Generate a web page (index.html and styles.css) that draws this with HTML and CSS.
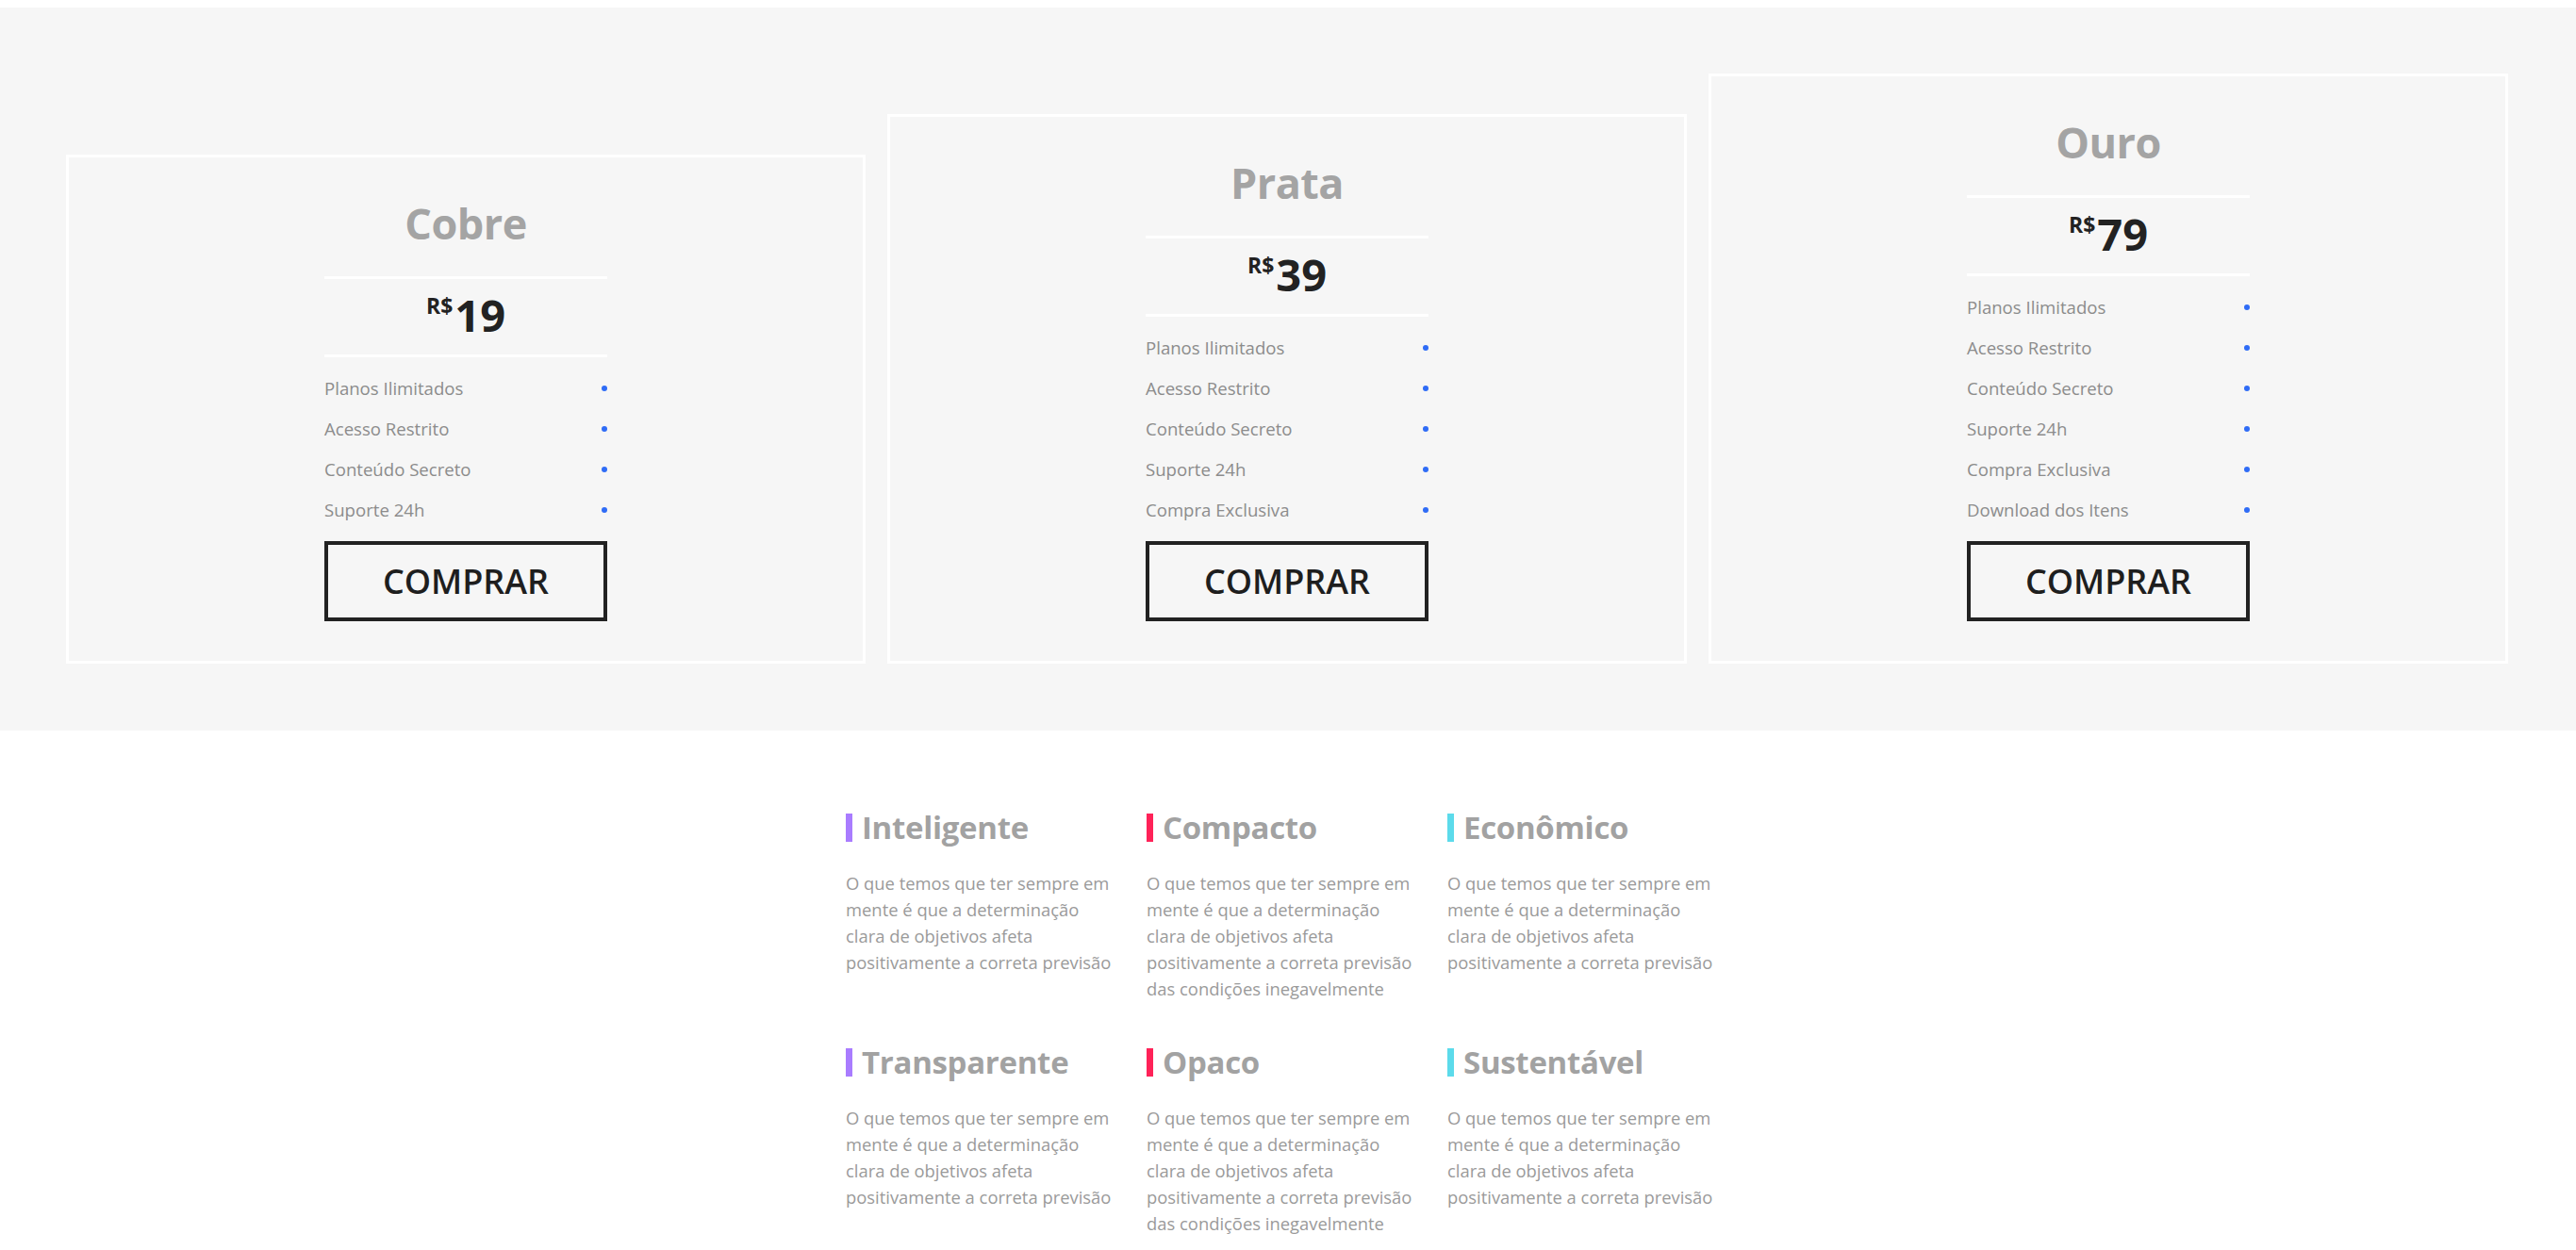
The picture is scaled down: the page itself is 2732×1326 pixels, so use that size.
FILE: index.html
```html
<!DOCTYPE html>
<html lang="pt-BR">
<head>
<meta charset="utf-8">
<title>Planos</title>
<link rel="stylesheet" href="styles.css">
</head>
<body>
<section class="pricing">
  <div class="card">
    <h3 class="plan-name">Cobre</h3>
    <div class="price"><span class="cur">R$</span><span class="amount">19</span></div>
    <ul class="features">
      <li>Planos Ilimitados<span class="dot"></span></li>
      <li>Acesso Restrito<span class="dot"></span></li>
      <li>Conteúdo Secreto<span class="dot"></span></li>
      <li>Suporte 24h<span class="dot"></span></li>
    </ul>
    <a class="buy" href="#">COMPRAR</a>
  </div>
  <div class="card">
    <h3 class="plan-name">Prata</h3>
    <div class="price"><span class="cur">R$</span><span class="amount">39</span></div>
    <ul class="features">
      <li>Planos Ilimitados<span class="dot"></span></li>
      <li>Acesso Restrito<span class="dot"></span></li>
      <li>Conteúdo Secreto<span class="dot"></span></li>
      <li>Suporte 24h<span class="dot"></span></li>
      <li>Compra Exclusiva<span class="dot"></span></li>
    </ul>
    <a class="buy" href="#">COMPRAR</a>
  </div>
  <div class="card">
    <h3 class="plan-name">Ouro</h3>
    <div class="price"><span class="cur">R$</span><span class="amount">79</span></div>
    <ul class="features">
      <li>Planos Ilimitados<span class="dot"></span></li>
      <li>Acesso Restrito<span class="dot"></span></li>
      <li>Conteúdo Secreto<span class="dot"></span></li>
      <li>Suporte 24h<span class="dot"></span></li>
      <li>Compra Exclusiva<span class="dot"></span></li>
      <li>Download dos Itens<span class="dot"></span></li>
    </ul>
    <a class="buy" href="#">COMPRAR</a>
  </div>
</section>

<section class="qualities">
  <div class="q-grid">
    <div class="quality">
      <h4 class="q-title purple">Inteligente</h4>
      <p>O que temos que ter sempre em mente é que a determinação clara de objetivos afeta positivamente a correta previsão</p>
    </div>
    <div class="quality">
      <h4 class="q-title pink">Compacto</h4>
      <p>O que temos que ter sempre em mente é que a determinação clara de objetivos afeta positivamente a correta previsão das condições inegavelmente</p>
    </div>
    <div class="quality">
      <h4 class="q-title cyan">Econômico</h4>
      <p>O que temos que ter sempre em mente é que a determinação clara de objetivos afeta positivamente a correta previsão</p>
    </div>
    <div class="quality">
      <h4 class="q-title purple">Transparente</h4>
      <p>O que temos que ter sempre em mente é que a determinação clara de objetivos afeta positivamente a correta previsão</p>
    </div>
    <div class="quality">
      <h4 class="q-title pink">Opaco</h4>
      <p>O que temos que ter sempre em mente é que a determinação clara de objetivos afeta positivamente a correta previsão das condições inegavelmente</p>
    </div>
    <div class="quality">
      <h4 class="q-title cyan">Sustentável</h4>
      <p>O que temos que ter sempre em mente é que a determinação clara de objetivos afeta positivamente a correta previsão</p>
    </div>
  </div>
</section>
</body>
</html>
```

FILE: styles.css
```css
* { box-sizing: border-box; }

html, body {
  margin: 0;
  padding: 0;
  background: #ffffff;
  font-family: "Open Sans", "Noto Sans", "Liberation Sans", sans-serif;
}

body { padding-top: 8px; }

.pricing {
  background: #f6f6f6;
  display: flex;
  align-items: flex-end;
  gap: 23px;
  padding: 70px 72px 71px 70px;
}

.card {
  flex: 1 1 0;
  border: 3px solid #ffffff;
  display: flex;
  flex-direction: column;
  align-items: center;
  padding: 42px 0 42px;
}

.plan-name {
  margin: 0;
  font-size: 45px;
  line-height: 56px;
  font-weight: 700;
  color: #a4a4a4;
  letter-spacing: -0.5px;
}

.price {
  width: 300px;
  margin-top: 28px;
  border-top: 3px solid #ffffff;
  border-bottom: 3px solid #ffffff;
  padding: 14px 0 18px;
  display: flex;
  justify-content: center;
  align-items: flex-start;
  color: #222222;
  font-weight: 700;
}

.cur {
  font-size: 23px;
  line-height: 24px;
  margin-top: 2px;
  margin-right: 2px;
}

.amount {
  font-size: 47px;
  line-height: 48px;
}

.features {
  list-style: none;
  margin: 11px 0 0;
  padding: 0;
  width: 300px;
}

.features li {
  display: flex;
  justify-content: space-between;
  align-items: center;
  height: 43px;
  font-size: 18.6px;
  color: #8c8c8c;
}

.dot {
  width: 6px;
  height: 6px;
  border-radius: 50%;
  background: #2f6cf6;
}

.buy {
  margin-top: 12px;
  width: 300px;
  height: 85px;
  border: 4px solid #222222;
  display: flex;
  align-items: center;
  justify-content: center;
  color: #1e1e1e;
  text-decoration: none;
  font-size: 36px;
  font-weight: 600;
}

.qualities {
  padding: 88px 0 40px;
}

.q-grid {
  width: 938px;
  margin: 0 auto;
  padding-right: 8px;
  display: grid;
  grid-template-columns: repeat(3, 292px);
  column-gap: 27px;
  row-gap: 49px;
}

.q-title {
  margin: 0;
  font-size: 33px;
  line-height: 30px;
  font-weight: 700;
  color: #a2a2a2;
  border-left: 7px solid;
  padding-left: 10px;
  letter-spacing: -0.3px;
}

.q-title.purple { border-color: #a97cff; }
.q-title.pink { border-color: #ff2258; }
.q-title.cyan { border-color: #5cdbeb; }

.quality p {
  margin: 30px 0 0;
  font-size: 18.4px;
  line-height: 28px;
  color: #9a9a9a;
}
```
